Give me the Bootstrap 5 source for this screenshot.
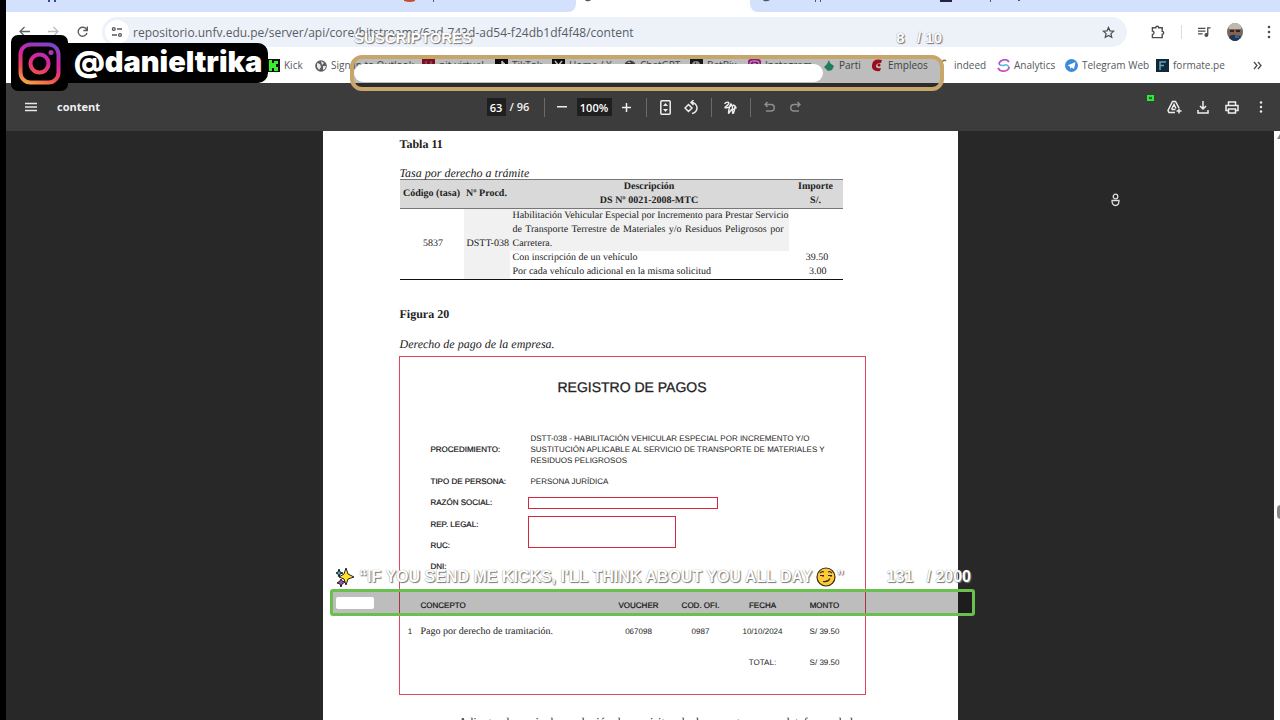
<!DOCTYPE html>
<html lang="es">
<head>
<meta charset="utf-8">
<meta name="viewport" content="width=device-width, initial-scale=1">
<title>content</title>
<link href="https://cdn.jsdelivr.net/npm/bootstrap@5.3.0/dist/css/bootstrap.min.css" rel="stylesheet">
<style>
body{font-family:"Open Sans","Noto Sans",sans-serif;background:#000;color:#4a4d51;padding-left:6px}
svg{display:block;flex:none}
.tabstrip{height:12px;background:#fff;overflow:hidden}
.tab-side{background:#d3e1fc}
.tab-side.first{flex:0 0 570px;border-radius:0 0 8px 0}
.tab-open{flex:0 0 174px}
.tab-side.rest{border-radius:0 0 0 8px}
.navrow{height:40px;padding:5px 5px 0 12px}
.navbtns{height:30px;gap:15px}
.omni{height:30px;border-radius:15px;background:#edf1fa;padding:0 12px 0 3px;margin-left:13px}
.omni input{font-size:12px;color:#5a5d63;height:24px}
.siteinfo{width:24px;height:24px;border-radius:12px;background:#fff}
.plain{background:none;border:0;padding:0;color:inherit;display:flex;align-items:center;justify-content:center}
.plain.siteinfo{background:#fff}
.marks{height:31px;padding-left:261px;font-size:10px;grid-template-columns:48px 107px 73px 57px 72px 66px 58px 74px 49px 67px 59px 68px 91px 1fr 46px}
.marks a{color:#55585d;text-decoration:none;white-space:nowrap;display:flex;align-items:center;gap:4px}
.pdfbar{height:49px;background:#3c3c3c;color:#f1f1f1;font-size:11px;padding:0 6px 0 15px}
.pdfbar .plain{width:26px;height:26px}
.pdfbar input{background:#1f1f1f;border:0;color:#fff;font-size:11px;font-weight:600;height:18px;padding:0;text-align:center}
.pageno{width:51px}
.pageno input{width:19px}
.zoomval{width:35px;margin:0 2px}
.vsep{width:1px;height:19px;background:#6b6b6b;margin:0 6px}
.dim{opacity:.45}
.viewer{background:#282828;min-height:0}
.gutter{width:6px;background:#fdfdfd;overflow:hidden}
.sheet{width:635px;background:#fff;color:#222;font-family:"Liberation Serif",serif;font-size:12px;line-height:16px;padding:5px 77px 0;text-rendering:geometricPrecision}
.sheet h2{font-size:12px;line-height:16px;font-weight:700;margin:0}
.tasa{width:443px;table-layout:fixed;font-size:10px;line-height:14px;border-bottom:1px solid #111}
.tasa th{background:#d9d9d9;text-align:center;border-top:1px solid #777;border-bottom:1px solid #777;padding:0}
.tasa td{padding:0 0 0 3px;vertical-align:middle}
.fullline{display:block;white-space:nowrap;text-align-last:justify}
.shade{background:#f1f1f1}
.receipt{border:1px solid #e0455a;width:467px;height:339px;margin:4px 0 0 -1px;font-family:"Liberation Sans",sans-serif;font-size:8px;line-height:11px;color:#222}
.receipt h3{font-size:14px;line-height:18px;font-weight:400;padding-top:21px;margin:0;text-align:center;color:#222;-webkit-text-stroke:.3px #222}
.fields{grid-template-columns:100px 1fr;padding:37px 31px 0 31px;row-gap:10px}
.fields dt{font-weight:400;color:#111;-webkit-text-stroke:.2px #111}
.fields dd{margin:0;white-space:nowrap}
.redbox{border:1px solid #d9263f;width:190px;height:12px;margin-left:-3px!important}
.redbox.tall{width:148px;height:32px;margin-top:-3px!important;grid-row:span 2;grid-column:2}
.pagos{width:100%;table-layout:fixed;margin-top:22px}
.pagos th{font-weight:400;-webkit-text-stroke:.2px #111;height:22px}
.pagos td{height:31px}
.pagos th,.pagos td{padding:0;text-align:center;vertical-align:middle}
.sheet .after{margin:19px -4px 0 59px;white-space:nowrap}
.overlay{position:absolute;z-index:5}
.glow{color:#fff;font-family:"Liberation Sans",sans-serif;font-weight:700;text-shadow:0 0 1px #777,1px 1px 1px #777;white-space:nowrap}
.handle{left:11px;top:35px}
.handle .logo{width:57px;height:56px;background:#000;border-radius:7px;z-index:1}
.handle .tag{height:40px;width:205px;margin-left:-5px;background:#000;border-radius:0 10px 10px 0;color:#fff;font-family:Inter,"Open Sans",sans-serif;font-weight:900;font-size:29px;line-height:38px;padding-left:11px}
.subs{left:350px;top:25px;width:594px}
.subs .glow{font-size:15px;line-height:26px;height:30px;padding:0 2px 0 4px}
.meter{background:rgba(0,0,0,.26);border-radius:12px;height:36px;border:4px solid #c8a669;padding-top:5px;--bs-progress-bar-bg:#fff}
.meter .progress-bar{height:18px;border-radius:9px}
.kicks{left:330px;top:564px;width:645px}
.kicks .glow{font-size:16px;line-height:25px;height:25px;padding:0 4px 0 5px}
.kicks .meter{height:27px;border:3px solid #69c04c;border-radius:3px;padding:5px 3px}
.kicks .progress-bar{height:12px;border-radius:2px}
.cursor{left:1111px;top:193px}
.kickdot{left:1147px;top:95px}
</style>
</head>
<body class="vh-100 overflow-hidden position-relative">
<div class="d-flex flex-column h-100">
<header class="bg-white">
  <div class="tabstrip d-flex">
    <div class="tab-side first"><svg width="570" height="3"><path d="M42 0h2v2h-2zM48 0h2v2h-2z" fill="#334a9c"/><path d="M398 0h11v1q-5 2-11 0z" fill="#c0522b"/><path d="M427 0h1v2h-1z" fill="#555"/></svg></div>
    <div class="tab-open"><svg width="30" height="3"><path d="M9 0h6q-2 2-5 1z" fill="#555"/></svg></div>
    <div class="tab-side rest flex-fill"><svg width="420" height="3"><path d="M13 0h7q-3 2-6 1z" fill="#456"/><path d="M65 0h1v2h-1zM70 0h1v2h-1zM240 0h1v2h-1zM268 0h2v1h-2z" fill="#555"/><path d="M190 0h12v2h-12z" fill="#224"/></svg></div>
  </div>
  <div class="navrow d-flex align-items-start">
    <nav class="navbtns d-flex align-items-center" aria-label="Navegación">
      <button class="plain" aria-label="Atrás"><svg width="14" height="14" viewBox="0 0 14 14" fill="none" stroke="#5f6368" stroke-width="1.300"><path d="M12 6.500H2M6.500 2 2 6.500 6.500 11"/></svg></button>
      <button class="plain" aria-label="Adelante"><svg width="14" height="14" viewBox="0 0 14 14" fill="none" stroke="#b9bcc1" stroke-width="1.300"><path d="M1 6.500h10M6.500 2 11 6.500 6.500 11"/></svg></button>
      <button class="plain" aria-label="Recargar"><svg width="13" height="14" viewBox="0 0 13 14" fill="none" stroke="#5a5d61" stroke-width="1.400"><path d="M10.600 4.500A4.500 4.500 0 1 0 11 8M11.300 1.500v4H7.300"/></svg></button>
    </nav>
    <div class="omni d-flex align-items-center flex-fill">
      <button class="plain siteinfo" aria-label="Información del sitio"><svg width="12" height="12" viewBox="0 0 12 12" fill="none" stroke="#55585c" stroke-width="1.300"><circle cx="2.800" cy="3" r="1.400"/><path d="M6 3h5M1 9h5"/><circle cx="9" cy="9" r="1.400"/></svg></button>
      <input class="border-0 bg-transparent flex-fill p-0 ms-1" aria-label="Dirección" value="repositorio.unfv.edu.pe/server/api/core/bitstreams/6ad-743d-ad54-f24db1df4f48/content">
      <button class="plain" aria-label="Marcador"><svg width="13" height="13" viewBox="0 0 14 14" fill="none" stroke="#4a4d51" stroke-width="1.300"><path d="m7 1.500 1.600 3.700 4 .4-3 2.600.9 3.900L7 10.100l-3.500 2 .9-3.900-3-2.600 4-.4z"/></svg></button>
    </div>
    <div class="d-flex align-items-center ps-4" style="height:30px">
      <button class="plain" aria-label="Extensiones"><svg width="14" height="14" viewBox="0 0 15 15" fill="none" stroke="#4a4d51" stroke-width="1.500"><path d="M1.500 3h3.600a1.600 1.600 0 0 1 3.200 0H12v3.800a1.600 1.600 0 0 1 0 3.200v3.500H1.500V10a1.700 1.700 0 0 0 0-3.400z"/></svg></button>
      <span class="vsep mx-3" style="height:14px;background:#d4dae6"></span>
      <button class="plain" aria-label="Medios"><svg width="13" height="12" viewBox="0 0 14 12" fill="none" stroke="#4a4d51" stroke-width="1.400"><path d="M0 2h8M0 5h8M0 8h5M10.500 9V1.500H13.500"/><circle cx="9" cy="9.200" r="1.400" fill="#4a4d51"/></svg></button>
      <button class="plain ms-3" aria-label="Perfil"><svg width="16" height="18" viewBox="0 0 16 18"><ellipse cx="8" cy="9" rx="8" ry="9" fill="#6f6863"/><path d="M1.500 6Q2 0 8 0t6.500 6z" fill="#bdb9b0"/><path d="M3 6h10v6q-5 3-10 0z" fill="#8b6149"/><path d="M3 7h4v2H3zM9 7h4v2H9z" fill="#2d2526"/><path d="M2 14q2-3 6-2t6 1q-2 5-6 5t-6-4z" fill="#263552"/><path d="M8 12h4v3H8z" fill="#2a65a8"/></svg></button>
      <button class="plain ps-4 pe-1" aria-label="Menú"><svg width="4" height="14" viewBox="0 0 4 14" fill="#4a4d51"><circle cx="2" cy="2" r="1.300"/><circle cx="2" cy="7" r="1.300"/><circle cx="2" cy="12" r="1.300"/></svg></button>
    </div>
  </div>
  <nav class="marks d-grid align-items-center pb-1" aria-label="Marcadores">
    <a href="#"><svg width="13" height="13"><path fill="#111" d="M0 0h13v13H0z"/><path d="M2 1h3v3h2V2h4v3H9v3h2v4H7V9H5v3H2z" fill="#35f02a"/></svg>Kick</a>
    <a href="#"><svg width="12" height="12"><circle cx="6" cy="6" r="5.800" fill="#5b5e62"/><path d="M2 3l3 1 1 3-2 3-2-3zM6 1l3 2-2 2zM8 6l3 0-1 3-2 1z" fill="#e8eaed"/></svg>Sign in to Outlook</a>
    <a href="#"><svg width="13" height="13"><path fill="#a31733" d="M0 0h13v13H0z"/><path d="M4 2v5M9 2v4" stroke="#e48a99"/></svg>nit-virtual</a>
    <a href="#"><svg width="13" height="13"><path fill="#111" d="M0 0h13v13H0z"/><path d="M7 2v7a2 2 0 1 1-2-2M7 2q1 3 3 3" stroke="#fff" fill="none" stroke-width="1.500"/></svg>TikTok</a>
    <a href="#"><svg width="13" height="13"><path fill="#111" d="M0 0h13v13H0z"/><path d="M3 2l7 9M10 2l-7 9" stroke="#fff" stroke-width="1.500"/></svg>Home / X</a>
    <a href="#"><svg width="12" height="12" fill="none" stroke="#444" stroke-width="1.200"><circle cx="6" cy="6" r="5"/><circle cx="6" cy="6" r="2"/><path d="M2 3l6 1M6 1l4 4M1 7l3-4"/></svg>ChatGPT</a>
    <a href="#"><svg width="13" height="13"><path fill="#222" d="M0 0h13v13H0z"/><circle cx="6" cy="6" r="4" fill="#bbb"/><path d="M6 2v7H3z" fill="#444"/></svg>BetBix</a>
    <a href="#"><svg width="13" height="13"><rect width="13" height="13" rx="3" fill="#c422ae"/><rect x="2" y="2" width="9" height="9" rx="2.500" fill="none" stroke="#fff"/><circle cx="6.500" cy="6.500" r="2" fill="none" stroke="#fff"/></svg>Instagram</a>
    <a href="#"><svg width="13" height="13"><path d="M7 1l1 3 4 3-2 4-4 1-4-4 3-3z" fill="#2aa87c"/></svg>Parti</a>
    <a href="#"><svg width="13" height="13"><path d="M11 1Q2-1 1 6t8 6l1-3q-5 1-5-2t5-3z" fill="#d11227"/><circle cx="8" cy="6" r="1.500" fill="#d11227"/></svg>Empleos</a>
    <a href="#"><svg width="12" height="13" fill="none" stroke="#78783a" stroke-width="1.500"><path d="M4 3q2-3 4-1"/></svg>indeed</a>
    <a href="#"><svg width="13" height="13" fill="none" stroke-width="1.700"><path d="M12 3Q9-1 4 2 1 4 3 6" stroke="#b64bd5"/><path d="M3 6q3 1 5 0t4 2" stroke="#4cc3d9"/><path d="M1 9q2 4 7 3 4-1 4-4" stroke="#d249c3"/></svg>Analytics</a>
    <a href="#"><svg width="13" height="13"><circle cx="6.500" cy="6.500" r="6.500" fill="#3c8bd8"/><path d="M2.500 6.500 10.500 3 9 10 6.500 8.500 5 10V7.500z" fill="#fff"/></svg>Telegram Web</a>
    <a href="#"><svg width="13" height="13"><path fill="#10283b" d="M0 0h13v13H0z"/><path d="M4 11V3h6M4 6.500h4" fill="none" stroke="#62a7b6" stroke-width="1.500"/></svg>formate.pe</a>
    <button class="plain" aria-label="Más marcadores"><svg width="9" height="9" fill="none" stroke="#4a4d51" stroke-width="1.300"><path d="M1 1l3 3.500L1 8M5 1l3 3.500L5 8"/></svg></button>
  </nav>
</header>
<div class="pdfbar d-flex align-items-center">
  <div class="d-flex align-items-center" style="flex:1 1 0">
    <button class="plain" style="width:20px" aria-label="Menú lateral"><svg width="12" height="10" stroke="#e8e8e8" stroke-width="1.300"><path d="M0 1.500h12M0 5h12M0 8.500h12"/></svg></button>
    <strong class="ms-3">content</strong>
  </div>
  <div class="d-flex align-items-center">
    <label class="pageno d-flex align-items-center gap-1 text-nowrap fw-semibold"><input value="63" aria-label="Página">/ 96</label>
    <span class="vsep me-1"></span>
    <button class="plain" aria-label="Alejar"><svg width="10" height="10"><path d="M0 4h10v1.500H0z" fill="#eee"/></svg></button>
    <input class="zoomval" value="100%" aria-label="Zoom">
    <button class="plain" aria-label="Acercar"><svg width="9" height="9"><path d="M0 4.500h9M4.500 0v9" stroke="#eee" stroke-width="1.500"/></svg></button>
    <span class="vsep"></span>
    <button class="plain" aria-label="Ajustar a página"><svg width="11" height="15" viewBox="0 0 11 15"><rect x=".8" y=".8" width="9.400" height="13.400" rx="1" fill="none" stroke="#eee" stroke-width="1.500"/><path d="M3 6l2.500-3L8 6zM3 9l2.500 3L8 9z" fill="#eee"/></svg></button>
    <button class="plain" aria-label="Girar"><svg width="15" height="15" viewBox="0 0 15 15" fill="none" stroke="#eee" stroke-width="1.500"><path d="M4.500 4.500 8 8l-3.500 3.500L1 8zM7 2.500a5.500 5.500 0 1 1 1 11M9.500 0 7 2.500 9.500 5"/></svg></button>
    <span class="vsep"></span>
    <button class="plain" aria-label="Dibujar"><svg width="13" height="13" viewBox="0 0 14 14" fill="none" stroke="#eee" stroke-width="1.500" stroke-linecap="round"><path d="M1 2.500Q4 .5 5 1.500T2.500 5.500 4 7 8 3.500 5.500 8.500 6 12t3.500-3 2.500-2.500-1 4-2-1.500 4-1.500"/></svg></button>
    <span class="vsep"></span>
    <button class="plain dim" disabled aria-label="Deshacer"><svg width="11" height="12" viewBox="0 0 11 12" fill="none" stroke="#eee" stroke-width="1.500"><path d="M3.500 1 1 3.500 3.500 6M1 3.500h6a3 3 0 0 1 0 6.500H2"/></svg></button>
    <button class="plain dim" disabled aria-label="Rehacer"><svg width="11" height="12" viewBox="0 0 11 12" fill="none" stroke="#eee" stroke-width="1.500"><path d="M7.500 1 10 3.500 7.500 6M10 3.500H4a3 3 0 0 0 0 6.500h5"/></svg></button>
  </div>
  <div class="d-flex justify-content-end" style="flex:1 1 0;gap:3px">
    <button class="plain" aria-label="Guardar en Drive"><svg width="15" height="14" viewBox="0 0 15 14" fill="none" stroke="#eee" stroke-width="1.500"><path d="M8 12.500H2L1 10.500 5.500 1.500h3L12 8M4.500 9.500 7 4.500l2 4M4.500 9.500h4M12 8.500v5M9.500 11h5"/></svg></button>
    <button class="plain" aria-label="Descargar"><svg width="12" height="13" viewBox="0 0 12 13" fill="none" stroke="#eee" stroke-width="1.500"><path d="M6 0v8M3 5l3 3 3-3M1 9v3h10V9"/></svg></button>
    <button class="plain" aria-label="Imprimir"><svg width="14" height="13" viewBox="0 0 14 13" fill="none" stroke="#eee" stroke-width="1.500"><path d="M3.500 4V1h7v3M3.500 9.500H1V4.500h12v5h-2.500M3.500 8h7v4h-7z"/></svg></button>
    <button class="plain" aria-label="Más opciones"><svg width="4" height="12" fill="#eee"><circle cx="2" cy="1.500" r="1.200"/><circle cx="2" cy="6" r="1.200"/><circle cx="2" cy="10.500" r="1.200"/></svg></button>
  </div>
</div>
<main class="viewer d-flex flex-fill overflow-hidden">
  <div class="flex-fill d-flex justify-content-center">
    <article class="sheet">
      <h2>Tabla 11</h2>
      <p class="fst-italic mb-0" style="margin-top:13px">Tasa por derecho a trámite</p>
      <table class="tasa mb-0" style="margin-top:-2px">
        <colgroup><col style="width:64px"><col style="width:46px"><col style="width:279px"><col style="width:54px"></colgroup>
        <thead><tr><th>Código (tasa)</th><th>Nº Procd.</th><th>Descripción<br>DS Nº 0021-2008-MTC</th><th>Importe<br>S/.</th></tr></thead>
        <tbody>
          <tr><td rowspan="3" class="text-center">5837</td><td rowspan="3" class="shade text-nowrap">DSTT-038</td><td class="shade" style="padding-right:5px"><span class="fullline">Habilitación Vehicular Especial por Incremento para Prestar Servicio</span> <span class="fullline">de Transporte Terrestre de Materiales y/o Residuos Peligrosos por</span> Carretera.</td><td></td></tr>
          <tr><td>Con inscripción de un vehículo</td><td class="text-center">39.50</td></tr>
          <tr><td>Por cada vehículo adicional en la misma solicitud</td><td class="text-end" style="padding-right:16px">3.00</td></tr>
        </tbody>
      </table>
      <h2 style="margin-top:26px">Figura 20</h2>
      <p class="fst-italic mb-0" style="margin-top:14px">Derecho de pago de la empresa.</p>
      <section class="receipt">
        <h3>REGISTRO DE PAGOS</h3>
        <dl class="fields d-grid mb-0">
          <dt class="align-self-center">PROCEDIMIENTO:</dt><dd>DSTT-038 - HABILITACIÓN VEHICULAR ESPECIAL POR INCREMENTO Y/O<br>SUSTITUCIÓN APLICABLE AL SERVICIO DE TRANSPORTE DE MATERIALES Y<br>RESIDUOS PELIGROSOS</dd>
          <dt>TIPO DE PERSONA:</dt><dd>PERSONA JURÍDICA</dd>
          <dt>RAZÓN SOCIAL:</dt><dd class="redbox"></dd>
          <dt>REP. LEGAL:</dt><dd class="redbox tall"></dd>
          <dt>RUC:</dt>
          <dt>DNI:</dt><dd></dd>
        </dl>
        <table class="pagos">
          <colgroup><col style="width:21px"><col><col style="width:72px"><col style="width:52px"><col style="width:72px"><col style="width:52px"><col style="width:14px"></colgroup>
          <thead><tr><th></th><th class="text-start">CONCEPTO</th><th>VOUCHER</th><th>COD. OFI.</th><th>FECHA</th><th>MONTO</th><th></th></tr></thead>
          <tbody>
            <tr><td>1</td><td class="text-start" style="font:10px 'Liberation Serif',serif">Pago por derecho de tramitación.</td><td>067098</td><td>0987</td><td>10/10/2024</td><td>S/ 39.50</td><td></td></tr>
            <tr><td colspan="4"></td><td>TOTAL:</td><td>S/ 39.50</td><td></td></tr>
          </tbody>
        </table>
      </section>
      <p class="after">Adjuntando copia de resolución de requisitos de documentos, para plataforma de la</p>
    </article>
  </div>
  <div class="gutter"><svg width="6" height="400"><path d="M6 3v5H3z" fill="#888"/><rect x="3" y="374" width="8" height="14" rx="4" fill="#8a8a8a"/></svg></div>
</main>
</div>

<div class="overlay handle d-flex align-items-center">
  <div class="logo d-flex align-items-center justify-content-center position-relative"><svg width="43" height="43" viewBox="0 0 43 43" fill="none" stroke="url(#ig)" stroke-width="4"><defs><linearGradient id="ig" gradientUnits="userSpaceOnUse" x1="12" y1="43" x2="28" y2="0"><stop offset="0" stop-color="#f5a742"/><stop offset=".3" stop-color="#ef4a52"/><stop offset=".6" stop-color="#d6249f"/><stop offset="1" stop-color="#7a43c8"/></linearGradient></defs><rect x="2.500" y="2.500" width="38" height="38" rx="10"/><circle cx="21.500" cy="21.500" r="9"/><circle cx="33" cy="10.500" r="2.500" fill="#b035b5" stroke="none"/></svg></div>
  <div class="tag">@danieltrika</div>
</div>
<div class="overlay subs">
  <div class="glow d-flex justify-content-between"><span>SUSCRIPTORES</span><span>8 &nbsp; / 10</span></div>
  <div class="meter"><div class="progress-bar" style="width:80%"></div></div>
</div>
<div class="overlay kicks">
  <div class="glow d-flex align-items-center">
    <svg width="20" height="20" viewBox="0 0 20 20" stroke="#222" stroke-linejoin="round"><path d="M11 1l2 6 6 3-6 2-2 6-2-6-5-2 5-3z" fill="#ffe32b"/><path d="M4 2l1 3 3 1-3 1-1 3-1-3-2-1 2-1z" fill="#3ea6b8"/><path d="M6 12l1 2 3 1-3 2-1 3-1-3-3-1 3-2z" fill="#a94ac0"/></svg>
    <span class="ms-1">“IF YOU SEND ME KICKS, I'LL THINK ABOUT YOU ALL DAY</span>
    <svg class="ms-1" width="20" height="20" viewBox="0 0 20 20" fill="none" stroke="#352b12" stroke-width="1.200"><circle cx="10" cy="10" r="9" fill="#ffc93c"/><path d="M4 6q2-2 4-1M12 5q2-1 4 1M4 8.500h4M12 8.500h4M7 14.500q5 1 7-3"/><path d="M6.500 9h1M14.500 9h1" stroke-width="2"/></svg>
    <span>”</span><span class="ms-auto">131 &nbsp; / 2000</span>
  </div>
  <div class="meter"><div class="progress-bar" style="width:6%"></div></div>
</div>
<svg class="overlay cursor" width="9" height="14" viewBox="0 0 9 14" fill="none" stroke="#ddd" stroke-width="1.300"><circle cx="4.500" cy="3.500" r="2.300"/><path d="M1 7.500h7q0 5-3.500 5T1 7.500z"/></svg>
<svg class="overlay kickdot" width="7" height="6"><path d="M0 0h7v6H0z" fill="#2bea3a"/><path d="M2 2l3 2M5 2L2 4" stroke="#0b5a14"/></svg>
<script src="https://cdn.jsdelivr.net/npm/bootstrap@5.3.0/dist/js/bootstrap.bundle.min.js"></script>
</body>
</html>
